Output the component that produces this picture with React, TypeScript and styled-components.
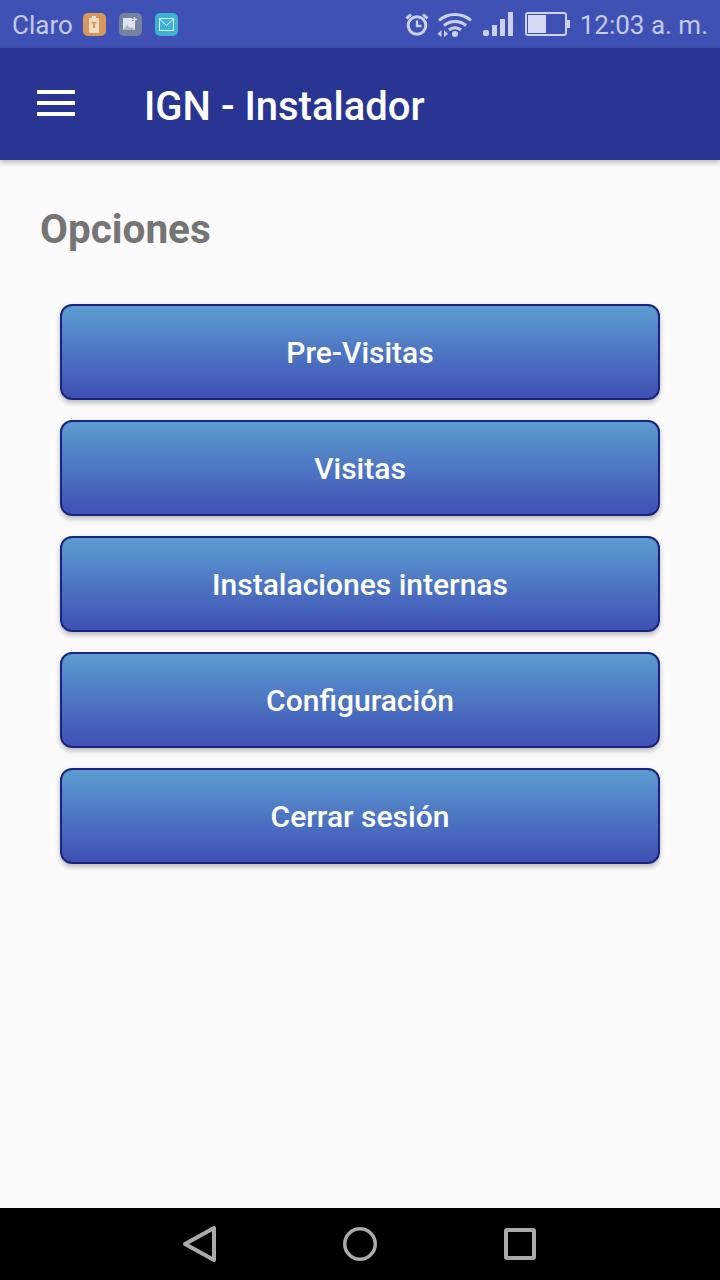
import React from 'react'
import styled, { createGlobalStyle } from 'styled-components'

const options = [
  'Pre-Visitas',
  'Visitas',
  'Instalaciones internas',
  'Configuración',
  'Cerrar sesión',
]

const App = () => (
  <>
    <GlobalStyle />
    <Screen>
      <StatusBar>
        <StatusLeft>
          <Carrier>Claro</Carrier>
          <NotifIcons>
            <NotifIcon color="#d6995a">
              <svg width="12" height="17" viewBox="0 0 12 17">
                <path d="M4 0h4v2h3v15H1V2h3z" fill="#ecdcc8" />
                <rect x="3.5" y="6" width="5" height="1.5" fill="#d6995a" />
                <rect x="5" y="7" width="2" height="5" fill="#d6995a" />
              </svg>
            </NotifIcon>
            <NotifIcon color="#75829f">
              <svg width="16" height="14" viewBox="0 0 16 14">
                <path d="M1 1h9v3h3v9H1z" fill="#dfe3ec" />
                <path d="M1 13l4-5 3 3 2-1 3 3z" fill="#aab3c6" />
                <path d="M12.5 0v5M10 2.5h5" stroke="#dfe3ec" strokeWidth="1.3" />
              </svg>
            </NotifIcon>
            <NotifIcon color="#3fb2d4">
              <svg width="15" height="13" viewBox="0 0 15 13" fill="none" stroke="#d9f1f8" strokeWidth="1">
                <rect x="0.5" y="0.5" width="14" height="12" />
                <path d="M0.5 1l7 6.5 7-6.5" />
              </svg>
            </NotifIcon>
          </NotifIcons>
        </StatusLeft>
        <StatusRight>
          <svg width="27" height="26" viewBox="0 0 27 26" fill="none" stroke="#ccd1ee" strokeWidth="3">
            <circle cx="13" cy="14.5" r="8.8" />
            <path d="M13 9.5v5.5h4.5" strokeWidth="2.4" />
            <path d="M2.5 7.5L7 3.5M23.5 7.5L19 3.5" strokeWidth="3" />
          </svg>
          <svg width="36" height="26" viewBox="0 0 36 26" fill="none" stroke="#ccd1ee" strokeWidth="3">
            <path d="M2 9.5C11 1.5 25 1.5 34 9.5" />
            <path d="M7 14.5C13.5 9 22.5 9 29 14.5" />
            <path d="M12 19C15.5 16 20.5 16 24 19" />
            <circle cx="18" cy="23" r="3" fill="#ccd1ee" stroke="none" />
            <path d="M4.5 19l-4 4 4 3zM7 19l4 4-4 3z" fill="#ccd1ee" stroke="none" />
          </svg>
          <SignalGap>
            <svg width="31" height="26" viewBox="0 0 31 26" fill="#ccd1ee">
              <rect x="0" y="19" width="6" height="6" rx="2" />
              <rect x="9" y="14" width="5" height="11" />
              <rect x="17" y="8" width="5" height="17" />
              <rect x="25" y="1" width="5" height="24" />
            </svg>
          </SignalGap>
          <BatteryGap>
            <svg width="45" height="24" viewBox="0 0 45 24" fill="none">
              <rect x="1" y="1" width="40" height="22" rx="2" stroke="#ccd1ee" strokeWidth="2" />
              <rect x="3" y="3" width="18" height="18" fill="#d5d9f1" />
              <rect x="42" y="8" width="3" height="8" fill="#ccd1ee" />
            </svg>
          </BatteryGap>
          <Clock>12:03 a. m.</Clock>
        </StatusRight>
      </StatusBar>
      <AppBar>
        <MenuButton>
          <MenuLine />
          <MenuLine />
          <MenuLine />
        </MenuButton>
        <AppTitle>IGN - Instalador</AppTitle>
      </AppBar>
      <Content>
        <Heading>Opciones</Heading>
        <OptionList>
          {options.map(option => (
            <OptionButton key={option}>{option}</OptionButton>
          ))}
        </OptionList>
      </Content>
      <NavBar>
        <svg width="36" height="40" viewBox="0 0 36 40" fill="none" stroke="#aaaaaa" strokeWidth="4" strokeLinejoin="round">
          <path d="M32 4v32L3 20z" />
        </svg>
        <svg width="36" height="36" viewBox="0 0 36 36" fill="none" stroke="#aaaaaa" strokeWidth="3.5">
          <circle cx="18" cy="18" r="15.25" />
        </svg>
        <svg width="32" height="32" viewBox="0 0 32 32" fill="none" stroke="#aaaaaa" strokeWidth="4" strokeLinejoin="round">
          <rect x="2" y="2" width="28" height="28" rx="1" />
        </svg>
      </NavBar>
    </Screen>
  </>
)

const GlobalStyle = createGlobalStyle`
  html, body {
    margin: 0;
    padding: 0;
    background: #fafafa;
  }
`

const Screen = styled.div`
  width: 720px;
  height: 1280px;
  display: flex;
  flex-direction: column;
  background: #fafafa;
  font-family: Roboto, "Liberation Sans", sans-serif;
  overflow: hidden;
`

const StatusBar = styled.div`
  height: 48px;
  flex: none;
  display: flex;
  align-items: center;
  justify-content: space-between;
  padding: 0 12px;
  background: #3f51b5;
  color: #c5cae9;
`

const StatusLeft = styled.div`
  display: flex;
  align-items: center;
`

const Carrier = styled.span`
  font-size: 26px;
  line-height: 48px;
  padding-top: 2px;
`

const NotifIcons = styled.div`
  display: flex;
  gap: 13px;
  margin-left: 10px;
`

const NotifIcon = styled.div<{ color: string }>`
  width: 23px;
  height: 23px;
  border-radius: 5px;
  background: ${props => props.color};
  display: flex;
  align-items: center;
  justify-content: center;
`

const StatusRight = styled.div`
  display: flex;
  align-items: center;
  gap: 6px;
`

const SignalGap = styled.div`
  display: flex;
  margin-left: 4px;
`

const BatteryGap = styled.div`
  display: flex;
  margin-left: 5px;
`

const Clock = styled.span`
  font-size: 26px;
  margin-left: 4px;
  padding-top: 2px;
`

const AppBar = styled.div`
  height: 112px;
  flex: none;
  display: flex;
  align-items: center;
  background: #283593;
  box-shadow: 0 2px 6px rgba(0, 0, 0, 0.3);
  position: relative;
`

const MenuButton = styled.div`
  width: 38px;
  margin: 0 0 2px 37px;
  display: flex;
  flex-direction: column;
  gap: 7px;
`

const MenuLine = styled.div`
  height: 4px;
  background: #ffffff;
`

const AppTitle = styled.h1`
  margin: 4px 0 0 69px;
  font-size: 40px;
  font-weight: 500;
  color: #ffffff;
`

const Content = styled.div`
  flex: 1;
  padding: 47px 60px 0 40px;
`

const Heading = styled.h2`
  margin: 0;
  font-size: 40.5px;
  line-height: 44px;
  font-weight: 700;
  color: #757575;
`

const OptionList = styled.div`
  display: flex;
  flex-direction: column;
  gap: 20px;
  margin: 53px 0 0 20px;
`

const OptionButton = styled.button`
  height: 96px;
  padding: 0;
  border: 2px solid #1a237e;
  border-radius: 12px;
  background: linear-gradient(to bottom, #5c9bd1, #3f51b5);
  box-shadow: 0 3px 5px rgba(0, 0, 0, 0.25);
  color: #ffffff;
  font-family: inherit;
  font-size: 30px;
  font-weight: 500;
`

const NavBar = styled.div`
  height: 72px;
  flex: none;
  display: grid;
  grid-template-columns: repeat(3, 160px);
  justify-items: center;
  align-items: center;
  padding: 0 120px;
  background: #000000;
`

export default App
